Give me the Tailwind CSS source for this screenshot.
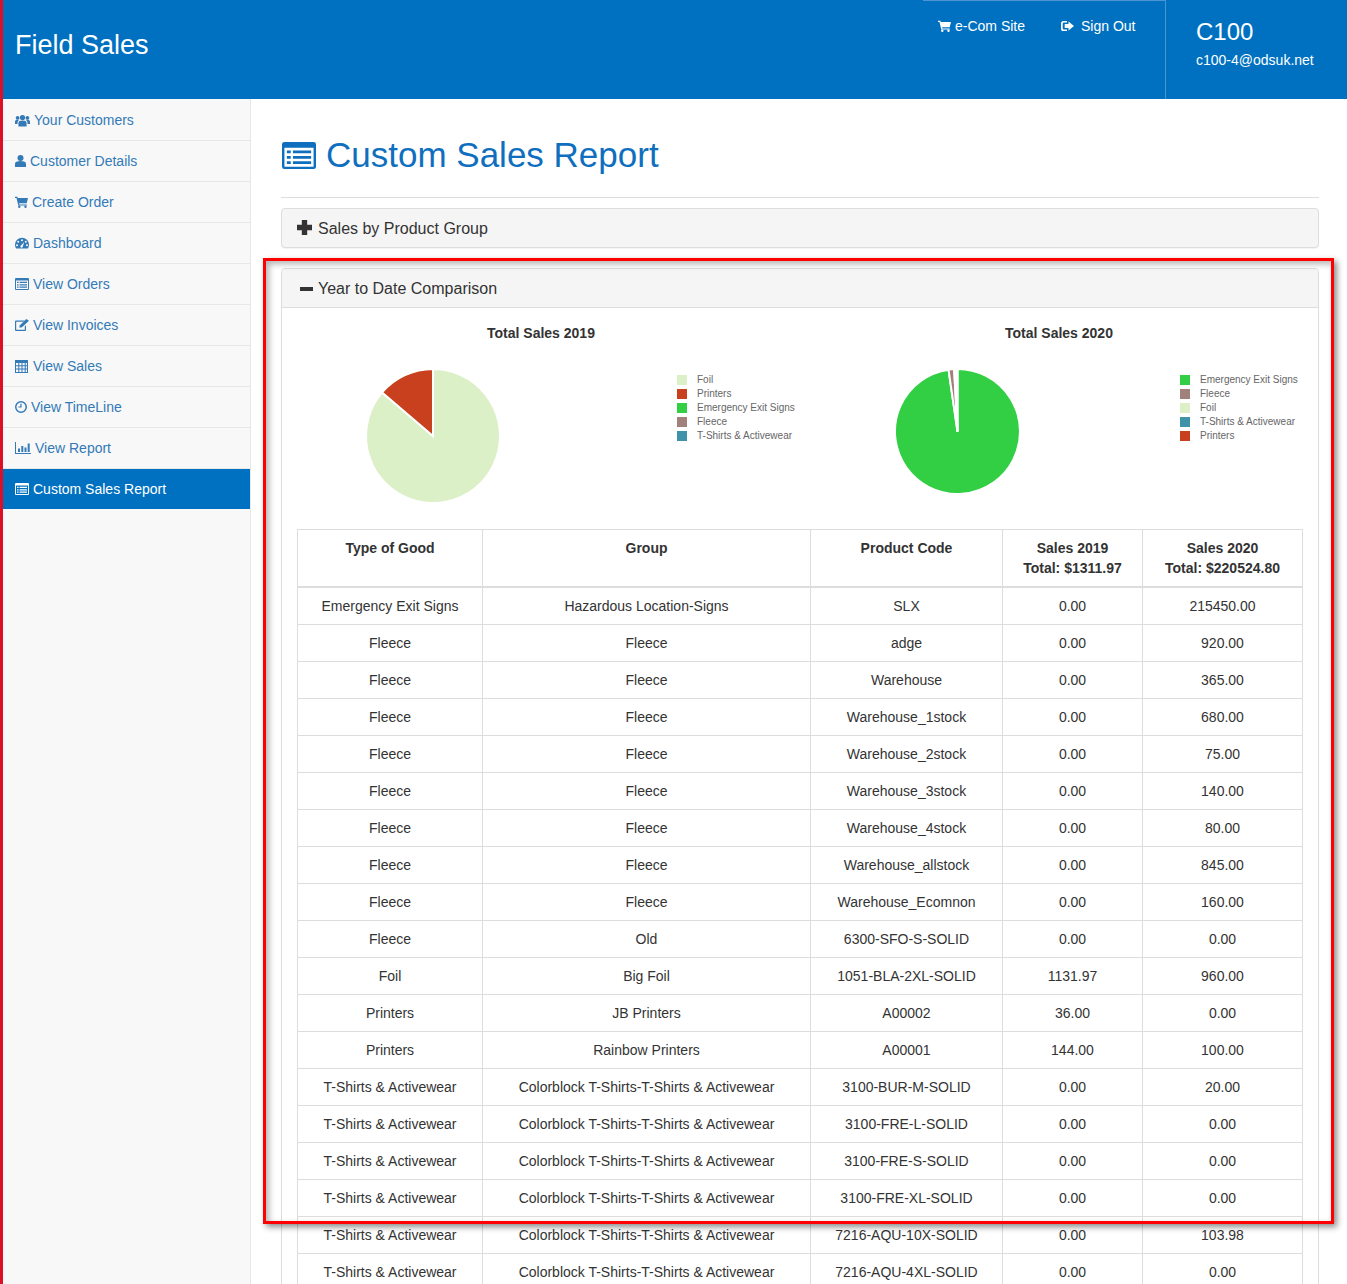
<!DOCTYPE html>
<html lang="en">
<head>
  <meta charset="UTF-8">
  <meta name="viewport" content="width=device-width, initial-scale=1.0">
  <title>Custom Sales Report</title>
  <script src="https://cdn.jsdelivr.net/npm/@tailwindcss/browser@4"></script>
</head>
<body class="font-['Liberation_Sans',Arial,sans-serif] text-[14px] leading-[20px] text-[#333] bg-white">
  <!-- Icon set -->
  <svg class="hidden">
    <symbol id="i-users" viewBox="0 0 15 12"><circle cx="7.5" cy="3" r="2.6"/><path d="M3.4 12V8.6C3.4 6.8 5 6 7.5 6s4.1.8 4.1 2.6V12z"/><circle cx="2.6" cy="3.4" r="1.9"/><circle cx="12.4" cy="3.4" r="1.9"/><path d="M0 9.5V7.2C0 6 1 5.6 2.6 5.6c.5 0 .9 0 1.300.1C2.900 6.300 2.500 7.300 2.500 8.500v1zM15 9.500V7.200C15 6 14 5.600 12.400 5.600c-.5 0-.9 0-1.300.1 1 .6 1.400 1.600 1.400 2.800v1z"/></symbol>
    <symbol id="i-user" viewBox="0 0 11 12"><circle cx="5.500" cy="3" r="3"/><path d="M0 12V8.800C0 7 2 6 5.500 6S11 7 11 8.800V12z"/></symbol>
    <symbol id="i-cart" viewBox="0 0 13 12"><path d="M0 .8h2.400l.3 1.200H13l-1.300 5.200H4l.3 1.200h7.500v1.100H3.300L1.500 1.900H0z"/><circle cx="4.300" cy="10.700" r="1.200"/><circle cx="10.500" cy="10.700" r="1.200"/></symbol>
    <symbol id="i-dash" viewBox="0 0 14 12"><path fill-rule="evenodd" d="M7 .8a7 7 0 0 1 7 7c0 1.500-.4 2.800-1.300 3.800H1.300C.4 10.600 0 9.300 0 7.800a7 7 0 0 1 7-7zM7 2.200a1 1 0 1 0 0 2 1 1 0 0 0 0-2zM3.200 3.800a1 1 0 1 0 0 2 1 1 0 0 0 0-2zM10.800 3.800a1 1 0 1 0 0 2 1 1 0 0 0 0-2zM2 7.200a1 1 0 1 0 0 2 1 1 0 0 0 0-2zM12 7.200a1 1 0 1 0 0 2 1 1 0 0 0 0-2zM9.200 5L6.200 8.300a1.200 1.200 0 1 0 1.600 1.200z"/></symbol>
    <symbol id="i-list" viewBox="0 0 14 12" preserveAspectRatio="none"><path fill-rule="evenodd" d="M1 0h12a1 1 0 0 1 1 1v10a1 1 0 0 1-1 1H1a1 1 0 0 1-1-1V1a1 1 0 0 1 1-1zM1 2.600V11h12V2.600z"/><path d="M2 3.800h1.600v1.200H2zM4.500 3.800H12v1.200H4.500zM2 6.200h1.600v1.200H2zM4.500 6.200H12v1.200H4.500zM2 8.600h1.600v1.200H2zM4.500 8.600H12v1.200H4.500z"/></symbol>
    <symbol id="i-edit" viewBox="0 0 14 12"><path d="M1 1.500h8.500L8.300 2.700H1.200v8.100h8.600V7.500L11 6.300v4.700a1 1 0 0 1-1 1H1a1 1 0 0 1-1-1V2.500a1 1 0 0 1 1-1z"/><path d="M4.300 8.800l.6-2.500L11.200 0 14 1.800 7 8.300z"/></symbol>
    <symbol id="i-table" viewBox="0 0 13 13"><path fill-rule="evenodd" d="M0 0h13v13H0zM1 3v2.200h2.300V3zM4.300 3v2.200h2.200V3zM7.500 3v2.200h2.200V3zM10.700 3v2.200H12V3zM1 6.200v2.300h2.300V6.200zM4.300 6.200v2.300h2.200V6.200zM7.500 6.200v2.300h2.200V6.200zM10.700 6.200v2.300H12V6.200zM1 9.500V12h2.300V9.500zM4.300 9.500V12h2.200V9.500zM7.500 9.500V12h2.200V9.500zM10.700 9.500V12H12V9.500z"/></symbol>
    <symbol id="i-time" viewBox="0 0 12 12"><path fill-rule="evenodd" d="M6 0a6 6 0 1 1 0 12A6 6 0 0 1 6 0zM6 1.500a4.500 4.500 0 1 0 0 9 4.500 4.500 0 0 0 0-9z"/><path d="M5.400 2.800h1.200v3.800H3.400V5.500h2z"/></symbol>
    <symbol id="i-stats" viewBox="0 0 16 12"><path d="M0 0h1v11h15v1H0z"/><path d="M3 6.500h2V10H3zM6.300 4h2v6h-2zM9.500 5.500h2V10h-2zM12.700 1.500h2V10h-2z"/></symbol>
    <symbol id="i-plus" viewBox="1 1 14 14"><path d="M5.500 1h5v4.500H15v5h-4.500V15h-5v-4.500H1v-5h4.500z"/></symbol>
    <symbol id="i-minus" viewBox="0 0 13 4"><path d="M0 0h13v4H0z"/></symbol>
    <symbol id="i-logout" viewBox="0 0 13 12"><path d="M3 1h3v1.400H3a1.300 1.300 0 0 0-1.300 1.300v4.600A1.300 1.300 0 0 0 3 9.600h3V11H3a2.700 2.700 0 0 1-3-2.700V3.700A2.700 2.700 0 0 1 3 1z"/><path d="M7.500 1.500L13 6l-5.500 4.500V8H3.700V4h3.800z"/></symbol>
  </svg>

  <div class="relative flex h-[1284px] overflow-hidden">
    <div class="w-[3px] shrink-0 bg-[#dc1027]"></div>

    <div class="flex min-w-0 flex-1 flex-col">
      <header class="flex h-[99px] shrink-0 bg-[#0071c1] text-white">
        <div class="flex-1 pl-[12px] pt-[28px] text-[27px] leading-[34px]">Field Sales</div>
        <nav class="flex h-[99px] w-[243px] items-start gap-[36px] border-t border-r border-[#4c93cf] pt-[15px] pl-[15px]">
          <a class="flex items-center" href="#"><svg class="mr-[4px] h-[12px] w-[13px] fill-current"><use href="#i-cart"/></svg>e-Com Site</a>
          <a class="flex items-center" href="#"><svg class="mr-[7px] h-[12px] w-[13px] fill-current"><use href="#i-logout"/></svg>Sign Out</a>
        </nav>
        <div class="w-[181px] pl-[30px] pt-[17px]">
          <div class="text-[24px] leading-[30px]">C100</div>
          <div class="mt-[3px]">c100-4@odsuk.net</div>
        </div>
      </header>

      <div class="flex min-h-0 flex-1">
        <aside class="w-[248px] shrink-0 border-r border-[#e7e7e7] bg-[#f8f8f8] pt-[1px] text-[#337ab7]">
          <a href="#" class="flex h-[41px] items-center border-b border-[#e7e7e7] pl-[12px]"><svg class="mr-[4px] h-[13px] w-[15px] fill-current"><use href="#i-users"/></svg>Your Customers</a>
          <a href="#" class="flex h-[41px] items-center border-b border-[#e7e7e7] pl-[12px]"><svg class="mr-[4px] h-[12px] w-[11px] fill-current"><use href="#i-user"/></svg>Customer Details</a>
          <a href="#" class="flex h-[41px] items-center border-b border-[#e7e7e7] pl-[12px]"><svg class="mr-[4px] h-[12px] w-[13px] fill-current"><use href="#i-cart"/></svg>Create Order</a>
          <a href="#" class="flex h-[41px] items-center border-b border-[#e7e7e7] pl-[12px]"><svg class="mr-[4px] h-[12px] w-[14px] fill-current"><use href="#i-dash"/></svg>Dashboard</a>
          <a href="#" class="flex h-[41px] items-center border-b border-[#e7e7e7] pl-[12px]"><svg class="mr-[4px] h-[12px] w-[14px] fill-current"><use href="#i-list"/></svg>View Orders</a>
          <a href="#" class="flex h-[41px] items-center border-b border-[#e7e7e7] pl-[12px]"><svg class="mr-[4px] h-[12px] w-[14px] fill-current"><use href="#i-edit"/></svg>View Invoices</a>
          <a href="#" class="flex h-[41px] items-center border-b border-[#e7e7e7] pl-[12px]"><svg class="mr-[5px] h-[13px] w-[13px] fill-current"><use href="#i-table"/></svg>View Sales</a>
          <a href="#" class="flex h-[41px] items-center border-b border-[#e7e7e7] pl-[12px]"><svg class="mr-[4px] h-[12px] w-[12px] fill-current"><use href="#i-time"/></svg>View TimeLine</a>
          <a href="#" class="flex h-[41px] items-center border-b border-[#e7e7e7] pl-[12px]"><svg class="mr-[4px] h-[12px] w-[16px] fill-current"><use href="#i-stats"/></svg>View Report</a>
          <a href="#" class="flex h-[40px] items-center bg-[#0071c1] pl-[12px] text-white"><svg class="mr-[4px] h-[12px] w-[14px] fill-current"><use href="#i-list"/></svg>Custom Sales Report</a>
        </aside>

        <main class="min-w-0 flex-1 pl-[30px] pr-[28px] pt-[36px]">
          <h1 class="flex items-center border-b border-[#ddd] pb-[22px] text-[35px] leading-[40px] text-[#0f6fbe]">
            <svg class="mr-[10px] ml-[1px] h-[27px] w-[34px] fill-current"><use href="#i-list"/></svg>Custom Sales Report
          </h1>

          <section class="mt-[10px] rounded-[4px] border border-[#ddd] bg-[#f5f5f5] shadow-[0_1px_1px_rgba(0,0,0,.05)]">
            <div class="flex h-[38px] items-center pl-[15px] pt-[2px] text-[16px]"><svg class="mr-[6px] mb-[3px] h-[15px] w-[15px] fill-current"><use href="#i-plus"/></svg>Sales by Product Group</div>
          </section>

          <section class="mt-[20px] rounded-t-[4px] border border-[#ddd] bg-white">
            <div class="flex h-[39px] items-center rounded-t-[4px] border-b border-[#ddd] bg-[#f5f5f5] pl-[18px] pt-[2px] text-[16px]"><svg class="mr-[5px] h-[4px] w-[13px] fill-current"><use href="#i-minus"/></svg>Year to Date Comparison</div>

            <div class="grid h-[221px] grid-cols-2">
              <div class="pt-[15px]">
                <div class="text-center font-bold">Total Sales 2019</div>
                <div class="flex items-start">
                  <svg class="ml-[80px] mt-[22px] shrink-0" width="142" height="142" viewBox="0 0 142 142">
                    <path d="M71 71L71 4A67 67 0 1 1 20.130 27.400Z" fill="#dcf0c8" stroke="#fff" stroke-width="2"/>
                    <path d="M71 71L20.130 27.400A67 67 0 0 1 71 4Z" fill="#c8401e" stroke="#fff" stroke-width="2"/>
                  </svg>
                  <ul class="ml-[173px] mt-[30px] text-[10px] leading-[14px] text-[#666]">
                    <li class="flex h-[14px] items-center"><i class="mr-[10px] h-[10px] w-[10px] bg-[#dcf0c8]"></i>Foil</li>
                    <li class="flex h-[14px] items-center"><i class="mr-[10px] h-[10px] w-[10px] bg-[#c8401e]"></i>Printers</li>
                    <li class="flex h-[14px] items-center"><i class="mr-[10px] h-[10px] w-[10px] bg-[#32ce44]"></i>Emergency Exit Signs</li>
                    <li class="flex h-[14px] items-center"><i class="mr-[10px] h-[10px] w-[10px] bg-[#a2807b]"></i>Fleece</li>
                    <li class="flex h-[14px] items-center"><i class="mr-[10px] h-[10px] w-[10px] bg-[#3f92a8]"></i>T-Shirts &amp; Activewear</li>
                  </ul>
                </div>
              </div>
              <div class="pt-[15px]">
                <div class="text-center font-bold">Total Sales 2020</div>
                <div class="flex items-start">
                  <svg class="ml-[90px] mt-[21px] shrink-0" width="135" height="135" viewBox="0 0 135 135">
                    <path d="M67.500 67.500L67.500 5A62.500 62.500 0 1 1 58.500 5.650Z" fill="#32ce44" stroke="#fff" stroke-width="2"/>
                    <path d="M67.500 67.500L58.500 5.650A62.500 62.500 0 0 1 64.130 5.090Z" fill="#a2807b" stroke="#fff" stroke-width="2"/>
                    <path d="M67.500 67.500L64.130 5.090A62.500 62.500 0 0 1 65.860 5.020Z" fill="#dcf0c8" stroke="#fff" stroke-width="2"/>
                    <path d="M67.500 67.500L65.860 5.020A62.500 62.500 0 0 1 67.500 5Z" fill="#c8401e" stroke="#fff" stroke-width="2"/>
                  </svg>
                  <ul class="ml-[155px] mt-[30px] text-[10px] leading-[14px] text-[#666]">
                    <li class="flex h-[14px] items-center"><i class="mr-[10px] h-[10px] w-[10px] bg-[#32ce44]"></i>Emergency Exit Signs</li>
                    <li class="flex h-[14px] items-center"><i class="mr-[10px] h-[10px] w-[10px] bg-[#a2807b]"></i>Fleece</li>
                    <li class="flex h-[14px] items-center"><i class="mr-[10px] h-[10px] w-[10px] bg-[#dcf0c8]"></i>Foil</li>
                    <li class="flex h-[14px] items-center"><i class="mr-[10px] h-[10px] w-[10px] bg-[#3f92a8]"></i>T-Shirts &amp; Activewear</li>
                    <li class="flex h-[14px] items-center"><i class="mr-[10px] h-[10px] w-[10px] bg-[#c8401e]"></i>Printers</li>
                  </ul>
                </div>
              </div>
            </div>

            <div class="px-[15px]">
              <table class="w-[1005px] table-fixed border-collapse text-center [&_td]:border [&_td]:border-[#ddd] [&_td]:p-[8px] [&_th]:border [&_th]:border-b-2 [&_th]:border-[#ddd] [&_th]:p-[8px] [&_th]:align-top">
                <colgroup>
                  <col class="w-[185px]"><col class="w-[328px]"><col class="w-[192px]"><col class="w-[140px]"><col class="w-[160px]">
                </colgroup>
                <thead>
                  <tr><th>Type of Good</th><th>Group</th><th>Product Code</th><th>Sales 2019<br>Total: $1311.97</th><th>Sales 2020<br>Total: $220524.80</th></tr>
                </thead>
                <tbody>
                  <tr><td>Emergency Exit Signs</td><td>Hazardous Location-Signs</td><td>SLX</td><td>0.00</td><td>215450.00</td></tr>
                  <tr><td>Fleece</td><td>Fleece</td><td>adge</td><td>0.00</td><td>920.00</td></tr>
                  <tr><td>Fleece</td><td>Fleece</td><td>Warehouse</td><td>0.00</td><td>365.00</td></tr>
                  <tr><td>Fleece</td><td>Fleece</td><td>Warehouse_1stock</td><td>0.00</td><td>680.00</td></tr>
                  <tr><td>Fleece</td><td>Fleece</td><td>Warehouse_2stock</td><td>0.00</td><td>75.00</td></tr>
                  <tr><td>Fleece</td><td>Fleece</td><td>Warehouse_3stock</td><td>0.00</td><td>140.00</td></tr>
                  <tr><td>Fleece</td><td>Fleece</td><td>Warehouse_4stock</td><td>0.00</td><td>80.00</td></tr>
                  <tr><td>Fleece</td><td>Fleece</td><td>Warehouse_allstock</td><td>0.00</td><td>845.00</td></tr>
                  <tr><td>Fleece</td><td>Fleece</td><td>Warehouse_Ecomnon</td><td>0.00</td><td>160.00</td></tr>
                  <tr><td>Fleece</td><td>Old</td><td>6300-SFO-S-SOLID</td><td>0.00</td><td>0.00</td></tr>
                  <tr><td>Foil</td><td>Big Foil</td><td>1051-BLA-2XL-SOLID</td><td>1131.97</td><td>960.00</td></tr>
                  <tr><td>Printers</td><td>JB Printers</td><td>A00002</td><td>36.00</td><td>0.00</td></tr>
                  <tr><td>Printers</td><td>Rainbow Printers</td><td>A00001</td><td>144.00</td><td>100.00</td></tr>
                  <tr><td>T-Shirts &amp; Activewear</td><td>Colorblock T-Shirts-T-Shirts &amp; Activewear</td><td>3100-BUR-M-SOLID</td><td>0.00</td><td>20.00</td></tr>
                  <tr><td>T-Shirts &amp; Activewear</td><td>Colorblock T-Shirts-T-Shirts &amp; Activewear</td><td>3100-FRE-L-SOLID</td><td>0.00</td><td>0.00</td></tr>
                  <tr><td>T-Shirts &amp; Activewear</td><td>Colorblock T-Shirts-T-Shirts &amp; Activewear</td><td>3100-FRE-S-SOLID</td><td>0.00</td><td>0.00</td></tr>
                  <tr><td>T-Shirts &amp; Activewear</td><td>Colorblock T-Shirts-T-Shirts &amp; Activewear</td><td>3100-FRE-XL-SOLID</td><td>0.00</td><td>0.00</td></tr>
                  <tr><td>T-Shirts &amp; Activewear</td><td>Colorblock T-Shirts-T-Shirts &amp; Activewear</td><td>7216-AQU-10X-SOLID</td><td>0.00</td><td>103.98</td></tr>
                  <tr><td>T-Shirts &amp; Activewear</td><td>Colorblock T-Shirts-T-Shirts &amp; Activewear</td><td>7216-AQU-4XL-SOLID</td><td>0.00</td><td>0.00</td></tr>
                </tbody>
              </table>
            </div>
          </section>
        </main>
      </div>
    </div>

    <!-- Highlight box drawn over the page -->
    <div class="pointer-events-none absolute left-[263px] top-[258px] h-[966px] w-[1071px] border-[3px] border-[#f00] shadow-[3px_3px_6px_rgba(0,0,0,.45),inset_3px_3px_6px_rgba(0,0,0,.3)]"></div>
  </div>
</body>
</html>
